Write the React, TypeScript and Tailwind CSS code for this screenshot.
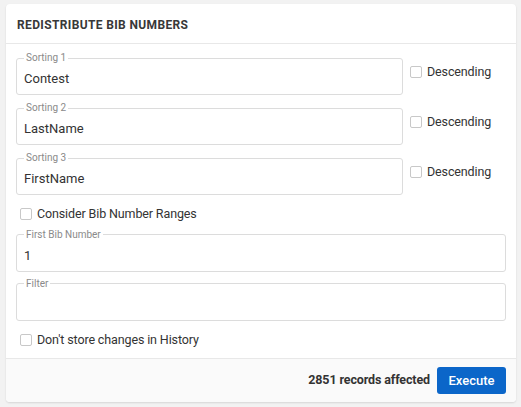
import type { ReactNode } from "react";

const FONT = "font-['Roboto','Liberation_Sans',sans-serif]";

function OutlinedField({ label, value, className }: { label: string; value?: string; className?: string }) {
  return (
    <fieldset
      className={["h-[43px] rounded-[3px] border border-[#dcdcdc] px-[7px]", className].filter(Boolean).join(" ")}
    >
      <legend className="px-[2px] text-[10px] leading-[12px] text-[#8a8a8a]">{label}</legend>
      <div className="pt-[6px] text-[13px] leading-[18px] text-[#333]">{value}</div>
    </fieldset>
  );
}

function Check({ children, className }: { children: ReactNode; className?: string }) {
  return (
    <label
      className={["flex items-center gap-[5px] text-[12.5px] tracking-[-0.01em] text-[#333]", className]
        .filter(Boolean)
        .join(" ")}
    >
      <span className="h-[12px] w-[12px] shrink-0 rounded-[2px] border border-[#c8c8c8] bg-white" />
      <span>{children}</span>
    </label>
  );
}

function SortRow({ n, value }: { n: number; value: string }) {
  return (
    <div className="flex items-start">
      <OutlinedField label={`Sorting ${n}`} value={value} className="w-[387px]" />
      <Check className="ml-[7px] mt-[11px]">Descending</Check>
    </div>
  );
}

export default function App() {
  return (
    <div className={`${FONT} min-h-[407px] w-[521px] bg-[#f2f2f2] pl-[6px] pr-[5px] pt-[4px]`}>
      <div className="flex h-[398px] flex-col rounded-[4px] bg-white shadow-[0_1px_2px_rgba(0,0,0,0.12)]">
        <div className="flex h-[40px] items-center border-b border-[#e8e8e8] px-[11px] pt-[2px]">
          <h2 className="text-[12px] font-bold tracking-[0.03em] text-[#383838]">REDISTRIBUTE BIB NUMBERS</h2>
        </div>
        <div className="flex flex-1 flex-col px-[10px] pt-[8px]">
          <div className="flex flex-col gap-[7px]">
            <SortRow n={1} value="Contest" />
            <SortRow n={2} value="LastName" />
            <SortRow n={3} value="FirstName" />
          </div>
          <Check className="ml-[4px] mt-[10px]">Consider Bib Number Ranges</Check>
          <OutlinedField label="First Bib Number" value="1" className="mt-[5px]" />
          <OutlinedField label="Filter" className="mt-[6px]" />
          <Check className="ml-[4px] mt-[10px]">Don't store changes in History</Check>
        </div>
        <div className="flex h-[44px] items-center justify-end gap-[7px] rounded-b-[4px] border-t border-[#e8e8e8] bg-[#fafafa] px-[10px]">
          <span className="text-[12.5px] font-bold tracking-[-0.01em] text-[#333]">2851 records affected</span>
          <button className="h-[27px] w-[69px] rounded-[3px] bg-[#0b66c9] text-[13px] font-medium text-white">
            Execute
          </button>
        </div>
      </div>
    </div>
  );
}
